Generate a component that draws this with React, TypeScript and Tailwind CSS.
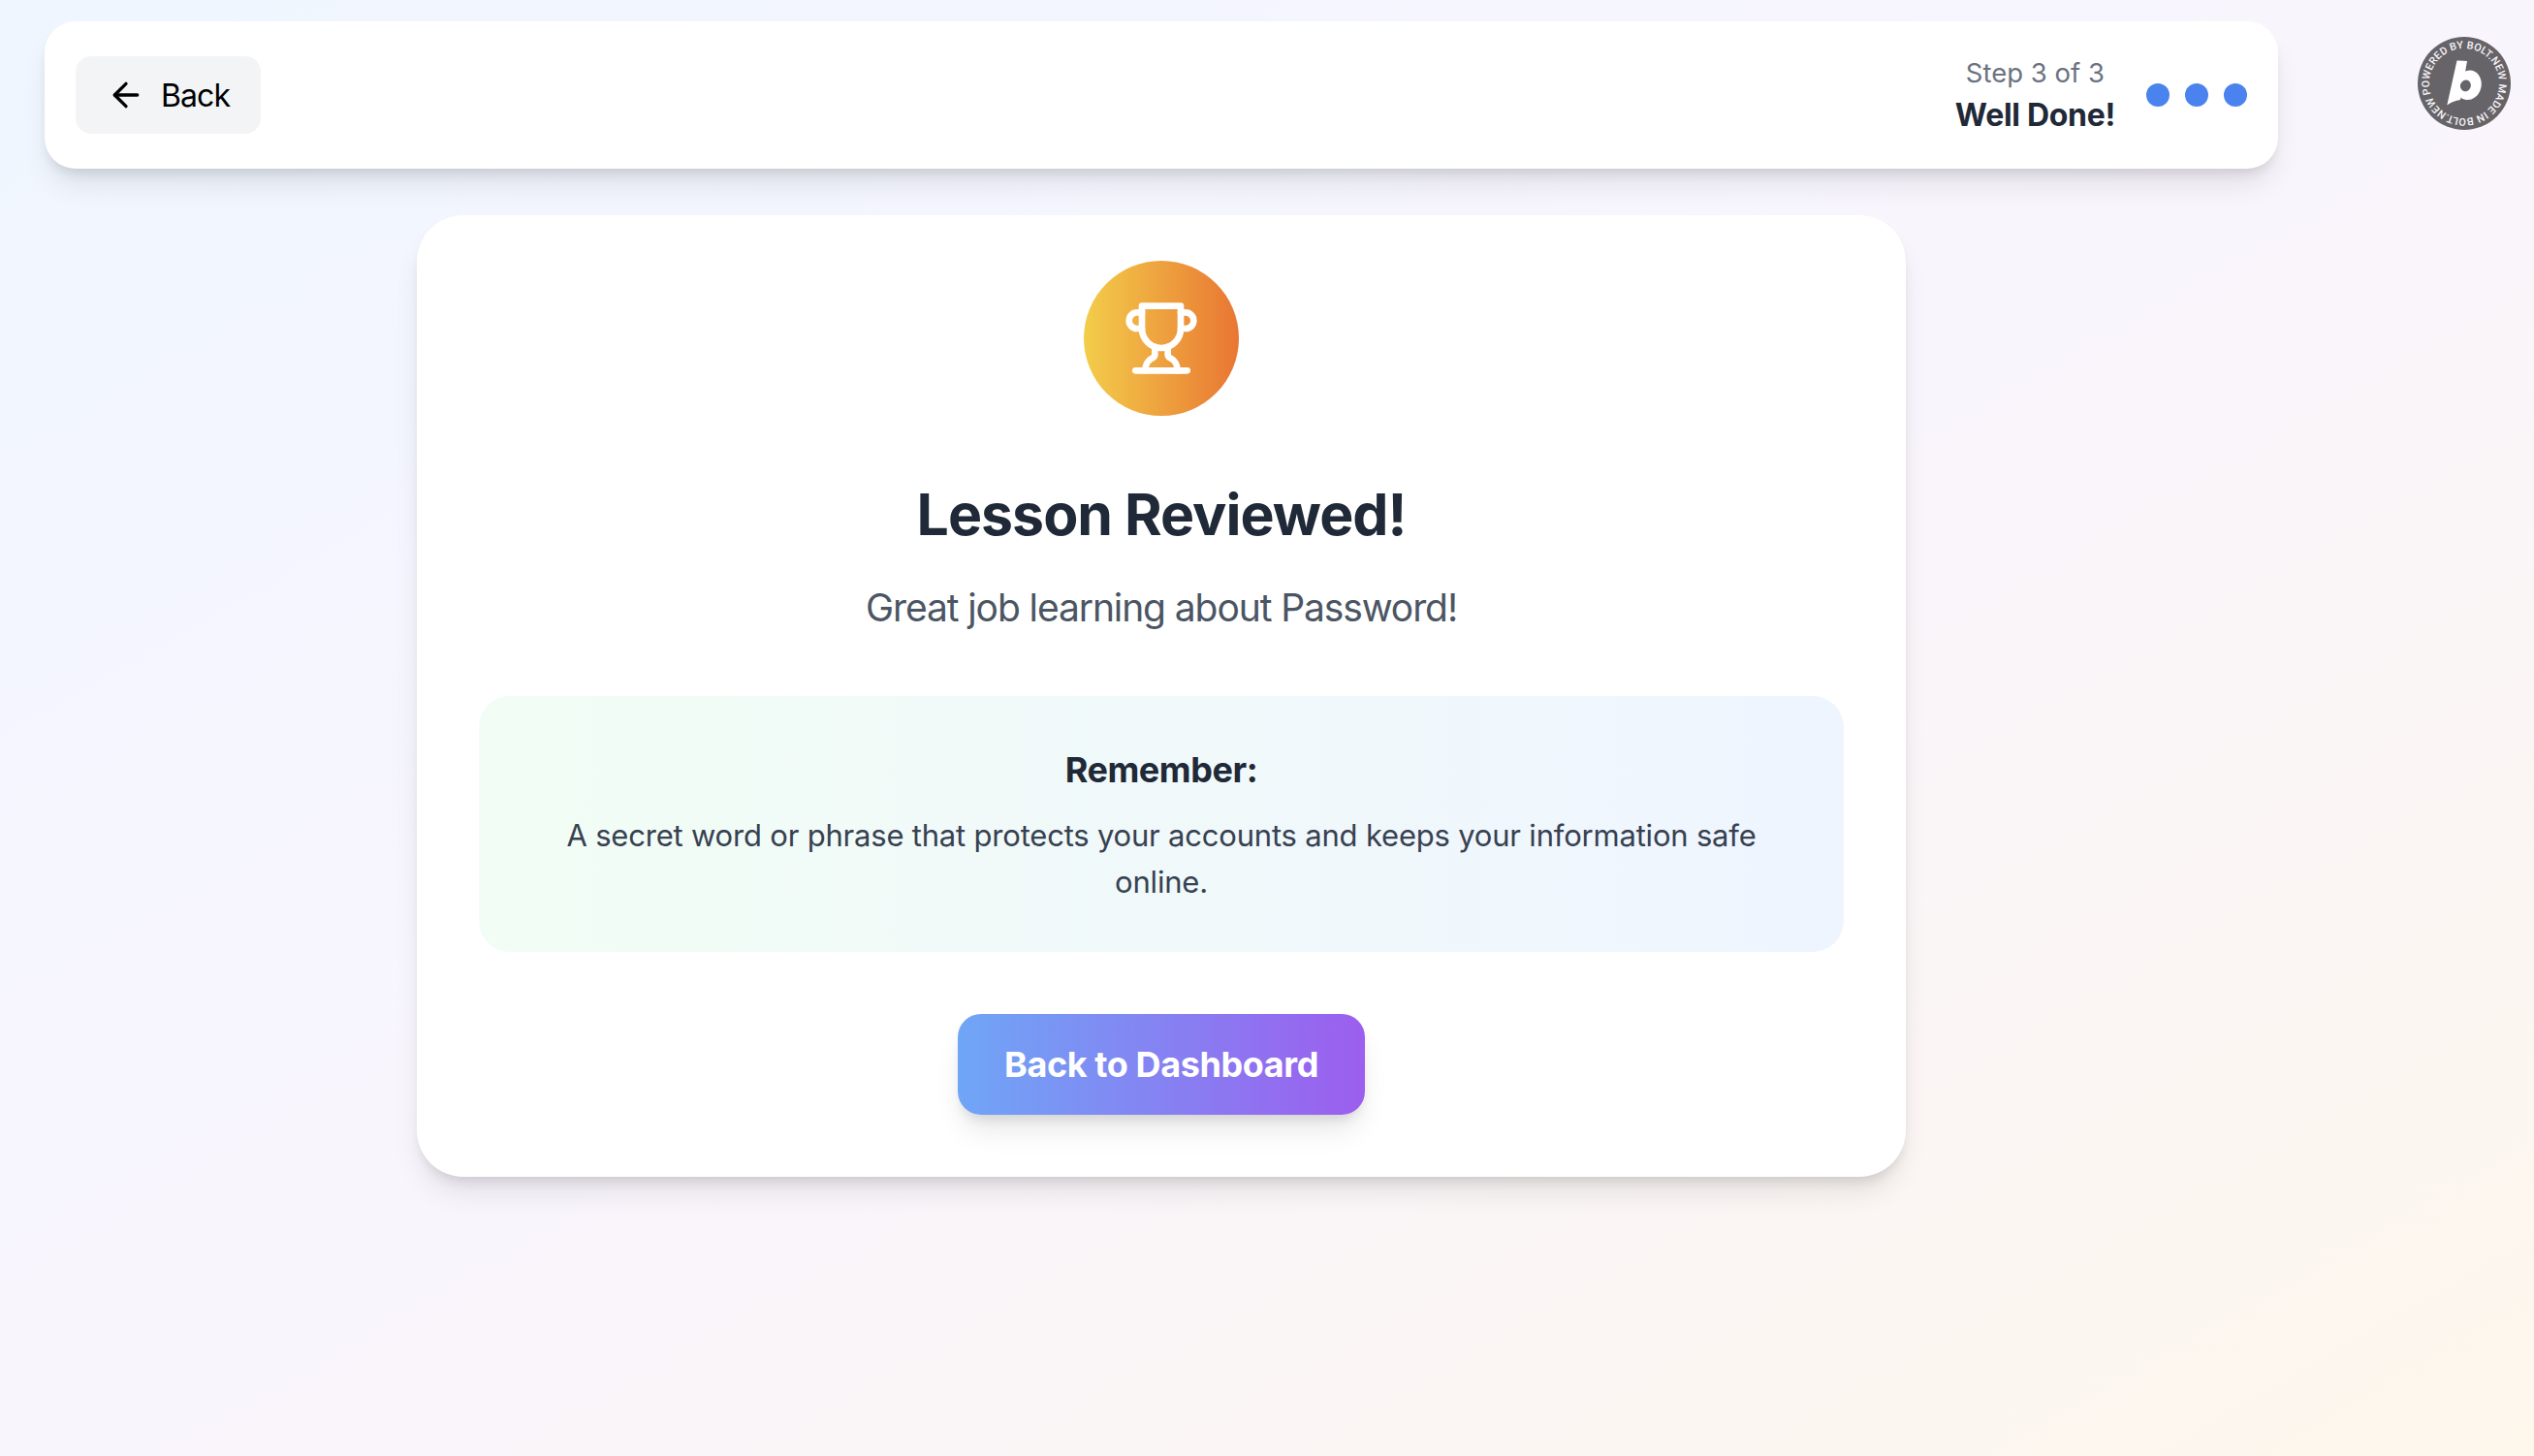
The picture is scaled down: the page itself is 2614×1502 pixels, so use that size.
import { ArrowLeft } from 'lucide-react';

interface Step {
  id: number;
  title: string;
}

const steps: Step[] = [
  { id: 1, title: 'Learn' },
  { id: 2, title: 'Practice' },
  { id: 3, title: 'Well Done!' },
];

const lesson = {
  title: 'Password',
  summary: 'A secret word or phrase that protects your accounts and keeps your information safe online.',
};

function TrophyIcon() {
  return (
    <svg
      className="w-20 h-20 text-white"
      viewBox="0 0 24 24"
      fill="none"
      stroke="currentColor"
      strokeWidth="2"
      strokeLinecap="round"
      strokeLinejoin="round"
    >
      <path d="M6 9H4.5a2.5 2.5 0 0 1 0-5H6" />
      <path d="M18 9h1.5a2.5 2.5 0 0 0 0-5H18" />
      <path d="M4 22h16" />
      <path d="M10 14.66V17c0 .55-.47.98-.97 1.21C7.85 18.75 7 20.24 7 22" />
      <path d="M14 14.66V17c0 .55.47.98.97 1.21C16.15 18.75 17 20.24 17 22" />
      <path d="M18 2H6v7a6 6 0 0 0 12 0V2Z" />
    </svg>
  );
}

function BoltBadge() {
  return (
    <svg className="absolute top-[38px] right-6 w-24 h-24" viewBox="0 0 96 96">
      <defs>
        <path id="badge-ring" d="M48 84a36 36 0 0 1 0-72a36 36 0 0 1 0 72" transform="rotate(72 48 48)" />
      </defs>
      <circle cx="48" cy="48" r="48" fill="#666468" />
      <text fill="#f7f5fa" fontFamily="Roboto, sans-serif" fontSize="10.8" fontWeight="500">
        <textPath href="#badge-ring" textLength="223" lengthAdjust="spacing">
          POWERED BY BOLT.NEW MADE IN BOLT.NEW
        </textPath>
      </text>
      {/* bolt mark: slanted stem with a round bowl */}
      <path d="M40.5 24.5L51 25L44 65Q36 66 30.3 70.5Z" fill="#fff" />
      <ellipse cx="52.6" cy="49.8" rx="13" ry="15.4" transform="rotate(14 52.6 49.8)" fill="#fff" />
      <ellipse cx="49.4" cy="50.4" rx="5.4" ry="5.9" transform="rotate(20 49.4 50.4)" fill="#666468" />
    </svg>
  );
}

export default function App() {
  const current = steps[steps.length - 1];

  return (
    <div className="relative min-h-[1502px] overflow-hidden bg-linear-to-br/srgb from-[#eff6ff] via-[#f9f5fd] to-[#fdf7ec] pt-[22px] pl-[46px] font-['Inter',sans-serif]">
      <div className="w-[2304px]">
        {/* Header */}
        <div className="flex items-center justify-between h-[152px] px-8 mb-12 bg-white rounded-[32px] shadow-[0_20px_30px_-6px_rgba(0,0,0,0.1),0_8px_12px_-4px_rgba(0,0,0,0.1)]">
          <button className="flex items-center gap-4 w-[191px] h-20 px-8 bg-[#f3f4f6] rounded-[16px] text-black text-[32px] leading-[48px] tracking-[-0.9px] whitespace-nowrap">
            <ArrowLeft className="w-10 h-10 shrink-0" />
            <span className="pt-0.5">Back</span>
          </button>

          <div className="flex items-center gap-8">
            <div className="pt-0.5 text-center whitespace-nowrap">
              <div className="text-[27.5px] leading-10 text-[#6b7280]">Step {current.id} of {steps.length}</div>
              <div className="text-[32px] leading-[48px] font-bold tracking-[-0.3px] text-[#1f2937]">{current.title}</div>
            </div>
            <div className="flex gap-4">
              {steps.map(step => (
                <div key={step.id} className="w-6 h-6 rounded-full bg-[#4b83ee]" />
              ))}
            </div>
          </div>
        </div>

        {/* Result card */}
        <div className="w-[1536px] mx-auto px-16 pt-[47px] pb-16 bg-white rounded-[48px] text-center shadow-[0_20px_30px_-6px_rgba(0,0,0,0.1),0_8px_12px_-4px_rgba(0,0,0,0.1)]">
          <div className="w-40 h-40 mx-auto mb-[66px] rounded-full flex items-center justify-center bg-linear-to-r/srgb from-[#f3cd4a] to-[#e97633]">
            <TrophyIcon />
          </div>

          <h2 className="mb-8 text-[59px] leading-[72px] font-bold tracking-[-1px] text-[#1f2937]">Lesson Reviewed!</h2>
          <p className="mb-[63px] text-[39px] leading-[56px] tracking-[-1.1px] text-[#4b5563]">
            Great job learning about {lesson.title}!
          </p>

          <div className="mb-16 p-12 rounded-[32px] bg-linear-to-r/srgb from-[#f2fdf5] to-[#eff5ff]">
            <h3 className="mb-4 text-[36px] leading-[56px] font-bold tracking-[-0.45px] text-[#1f2937]">Remember:</h3>
            <p className="text-[31px] leading-[48px] tracking-[-0.2px] text-[#374151]">{lesson.summary}</p>
          </div>

          <button className="w-[420px] h-[104px] rounded-[24px] text-white text-[36px] leading-[56px] font-bold tracking-[-0.4px] whitespace-nowrap bg-linear-to-r/srgb from-[#6fa6f6] to-[#9c5eee] shadow-[0_20px_30px_-6px_rgba(0,0,0,0.1),0_8px_12px_-4px_rgba(0,0,0,0.1)]">
            Back to Dashboard
          </button>
        </div>
      </div>

      <BoltBadge />
    </div>
  );
}
